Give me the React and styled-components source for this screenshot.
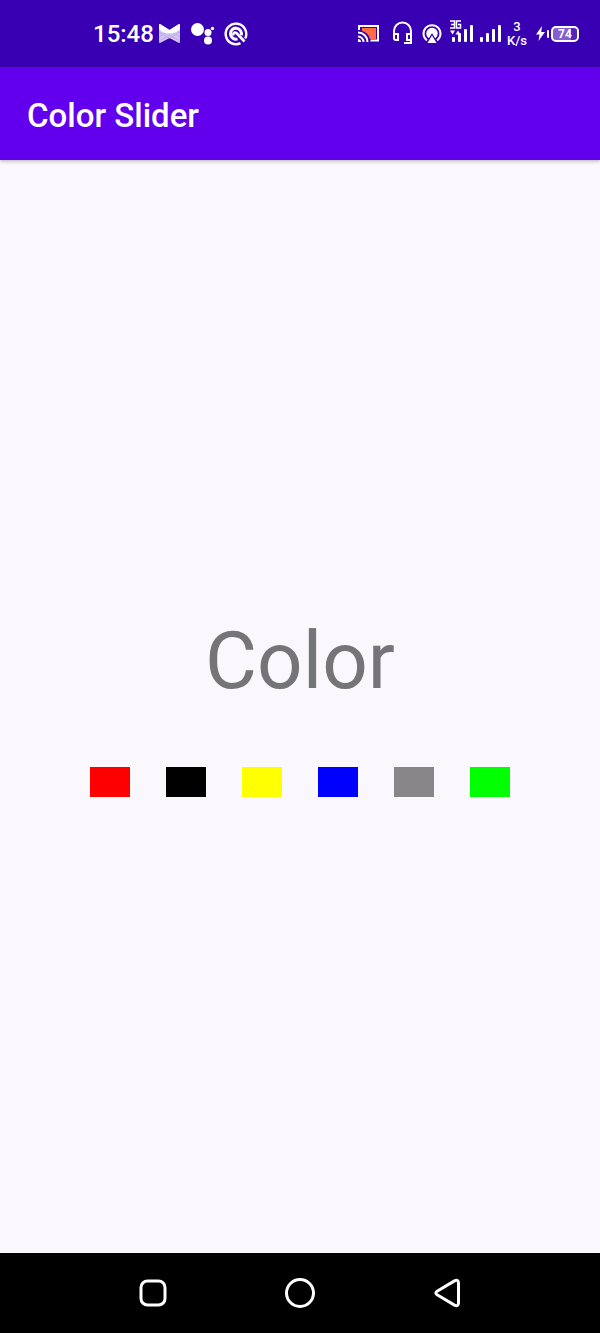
import React, { useState } from "react";
import styled, { createGlobalStyle } from "styled-components";

const GlobalStyle = createGlobalStyle`
  * { box-sizing: border-box; }
  body {
    margin: 0;
    background: #faf8fc;
    font-family: Roboto, "Liberation Sans", sans-serif;
  }
`;

const Screen = styled.div`
  display: flex;
  flex-direction: column;
  min-height: 100vh;
`;

const StatusBar = styled.div`
  display: flex;
  align-items: center;
  justify-content: space-between;
  height: 67px;
  padding: 0 21px 0 93px;
  background: #3900b3;
  color: #fff;
`;

const StatusGroup = styled.div`
  display: flex;
  align-items: center;
  gap: ${(p) => p.$gap}px;
`;

const Clock = styled.time`
  font-size: 24px;
  line-height: 28px;
  font-weight: 500;
`;

const Icon = styled.svg`
  display: block;
  flex: none;
  overflow: visible;
`;

const Cellular = styled.div`
  display: flex;
  gap: 4px;
`;

const Speed = styled.div`
  width: 20px;
  font-size: 13px;
  line-height: 14px;
  font-weight: 500;
  text-align: center;
  white-space: nowrap;
`;

const Power = styled.div`
  display: flex;
  align-items: center;
  gap: 2px;
`;

const Battery = styled.div`
  width: 28px;
  height: 16px;
  border: 2px solid #fff;
  border-radius: 5px;
  background: linear-gradient(90deg, #8460cf 74%, #5526bd 74%);
  font-size: 12px;
  line-height: 12px;
  font-weight: 700;
  text-align: center;
`;

const AppBar = styled.header`
  display: flex;
  align-items: center;
  height: 93px;
  padding: 4px 27px 0;
  background: #6200ee;
  box-shadow: 0 1px 4px rgba(0, 0, 0, 0.3);
  color: #fff;
`;

const Title = styled.h1`
  margin: 0;
  font-size: 33px;
  line-height: 40px;
  font-weight: 500;
`;

const Content = styled.main`
  flex: 1;
  display: flex;
  flex-direction: column;
  align-items: center;
  justify-content: center;
  gap: 59px;
  padding-bottom: 2px;
`;

const Sample = styled.p`
  margin: 0;
  color: ${(p) => p.$color};
  font-size: 80px;
  line-height: 94px;
`;

const Palette = styled.div`
  display: flex;
  flex-wrap: wrap;
  justify-content: center;
  gap: 36px;
`;

const Swatch = styled.button`
  width: 40px;
  height: 30px;
  padding: 0;
  border: 0;
  background: ${(p) => p.$color};
  cursor: pointer;
`;

const NavBar = styled.nav`
  display: flex;
  height: 80px;
  padding: 0 80px;
  background: #000;
`;

const NavButton = styled.button`
  flex: 1;
  display: flex;
  align-items: center;
  justify-content: center;
  padding: 0;
  border: 0;
  background: none;
  color: #fff;
  cursor: pointer;
`;

const swatches = [
  { name: "Red", color: "#ff0000" },
  { name: "Black", color: "#000000" },
  { name: "Yellow", color: "#ffff00" },
  { name: "Blue", color: "#0000ff" },
  { name: "Gray", color: "#888688" },
  { name: "Green", color: "#00ff00" },
];

const ButterflyIcon = () => (
  <Icon width="21" height="20" viewBox="0 0 21 20" aria-hidden="true">
    <path d="M0 1 Q0 0 1 0 L10.500 6 L20 0 Q21 0 21 1 V18 Q21 19 20 19 L10.500 14 L1 19 Q0 19 0 18Z" fill="#d3c5f2" />
    <path d="M0 1 Q0 0 1 0 L10.500 6 L20 0 Q21 0 21 1 V5 Q17 10 10.500 9 Q4 10 0 5Z" fill="#fff" />
    <path d="M0 8 L10.500 14 L21 8 M0 13 L7 9 M21 13 L14 9 M0 17 L10.500 11 L21 17" stroke="#bca9ea" fill="none" />
  </Icon>
);

const AssistantIcon = () => (
  <Icon width="24" height="22" viewBox="0 0 24 22" fill="#fff" aria-hidden="true">
    <circle cx="7.500" cy="6.500" r="6.500" />
    <circle cx="18" cy="9.500" r="3.500" />
    <circle cx="22.500" cy="5.500" r="1.700" />
    <circle cx="18" cy="17.500" r="4" />
  </Icon>
);

const QIcon = () => (
  <Icon width="24" height="24" viewBox="0 0 24 24" fill="none" stroke="#fff" strokeWidth="2.400" aria-hidden="true">
    <path d="M16.500 21.200 A10.300 10.300 0 1 1 21.200 16.500" />
    <path d="M13.500 16.900 A5.500 5.500 0 1 1 17.200 13.200" strokeWidth="3" />
    <path d="M9 13.500 Q9.500 9 13 11.500 L20.500 19.500" strokeWidth="2.600" />
  </Icon>
);

const CastIcon = () => (
  <Icon width="21" height="18" viewBox="0 0 21 18" fill="none" stroke="#fff" strokeWidth="2" aria-hidden="true">
    <path d="M4 3 H18 V14 H12 Q10 7 4 6Z" fill="#ff6b43" stroke="none" />
    <path d="M1 5 V1 H20 V15.500 H12.500" />
    <path d="M0 7.500 A9.500 9.500 0 0 1 9.500 17 M0 11.500 A5.500 5.500 0 0 1 5.500 17" />
    <path d="M0 14 A3 3 0 0 1 3 17 H0Z" fill="#fff" stroke="none" />
  </Icon>
);

const HeadsetIcon = () => (
  <Icon width="20" height="23" viewBox="0 0 20 23" fill="none" stroke="#fff" strokeWidth="2" aria-hidden="true">
    <path d="M1 17 V9 A8.500 8.500 0 0 1 18 9 V21 H11" />
    <path d="M1 12 H5 V18 H3 Q1 18 1 16Z M18 12 H14 V18 H18Z" />
  </Icon>
);

const HotspotIcon = () => (
  <Icon width="20" height="20" viewBox="0 0 20 20" fill="none" stroke="#fff" strokeWidth="2" aria-hidden="true">
    <path d="M5 16.500 A8.500 8.500 0 1 1 15 16.500" />
    <circle cx="10" cy="9.500" r="5.700" fill="#fff" stroke="none" />
    <path d="M10 9 L16.500 20 H3.500Z" fill="#3900b3" stroke="none" />
    <path d="M10 11.500 L14.500 19 H5.500Z" fill="#fff" stroke="none" />
  </Icon>
);

const SignalIcon = ({ network }) => (
  <Icon width="24" height="23" viewBox="0 0 24 23" fill="#fff" aria-hidden="true">
    <rect x="1" y="15" width="3" height="5" rx="1" />
    <rect x="7" y="11" width="3" height="9" rx="1" />
    <rect x="13" y="7" width="3" height="13" rx="1" />
    <rect x="19" y="3" width="3" height="17" rx="1" />
    {network && (
      <>
        <path d="M-1 -1 H3.500 V6 H-1 M0 2.500 H3.500 M10 -1 H5.500 V6 H9.500 V2.500 H7" fill="none" stroke="#fff" strokeWidth="1.500" />
        <path d="M-1 8.500 H4 L1.500 12.500Z M4.500 12.500 H9.500 L7 8.500Z" />
      </>
    )}
  </Icon>
);

const BoltIcon = () => (
  <Icon width="9" height="15" viewBox="0 0 9 15" fill="#fff" aria-hidden="true">
    <path d="M6 0 L0 8.500 H3.500 L2.500 15 L9 6 H5.200Z" />
  </Icon>
);

const Terminal = styled.span`
  width: 2px;
  height: 8px;
  border-radius: 1px;
  background: #fff;
`;

export default function App() {
  const [color, setColor] = useState("#757477");

  return (
    <Screen>
      <GlobalStyle />
      <StatusBar>
        <StatusGroup $gap={10}>
          <StatusGroup $gap={5}>
            <Clock>15:48</Clock>
            <ButterflyIcon />
          </StatusGroup>
          <AssistantIcon />
          <QIcon />
        </StatusGroup>
        <StatusGroup $gap={9}>
          <StatusGroup $gap={14}>
            <CastIcon />
            <HeadsetIcon />
          </StatusGroup>
          <HotspotIcon />
          <StatusGroup $gap={4}>
            <Cellular>
              <SignalIcon network />
              <SignalIcon />
            </Cellular>
            <Speed>
              3<br />
              K/s
            </Speed>
          </StatusGroup>
          <Power>
            <BoltIcon />
            <Terminal />
            <Battery>74</Battery>
          </Power>
        </StatusGroup>
      </StatusBar>
      <AppBar>
        <Title>Color Slider</Title>
      </AppBar>
      <Content>
        <Sample $color={color}>Color</Sample>
        <Palette>
          {swatches.map((s) => (
            <Swatch
              key={s.name}
              type="button"
              aria-label={s.name}
              $color={s.color}
              onClick={() => setColor(s.color)}
            />
          ))}
        </Palette>
      </Content>
      <NavBar>
        <NavButton type="button" aria-label="Recent apps">
          <Icon width="28" height="28" viewBox="0 0 28 28" fill="none" stroke="currentColor" strokeWidth="3">
            <rect x="2" y="2" width="24" height="24" rx="6.500" />
          </Icon>
        </NavButton>
        <NavButton type="button" aria-label="Home">
          <Icon width="30" height="30" viewBox="0 0 30 30" fill="none" stroke="currentColor" strokeWidth="3">
            <circle cx="15" cy="15" r="13.500" />
          </Icon>
        </NavButton>
        <NavButton type="button" aria-label="Back">
          <Icon width="28" height="28" viewBox="0 0 28 28" fill="none" stroke="currentColor" strokeWidth="3" strokeLinejoin="round">
            <path d="M3.700 12.500 L21.500 1.900 Q25.500 0 25.500 4 V24 Q25.500 28 21.500 26.100 L3.700 15.500 Q2 14 3.700 12.500Z" />
          </Icon>
        </NavButton>
      </NavBar>
    </Screen>
  );
}
